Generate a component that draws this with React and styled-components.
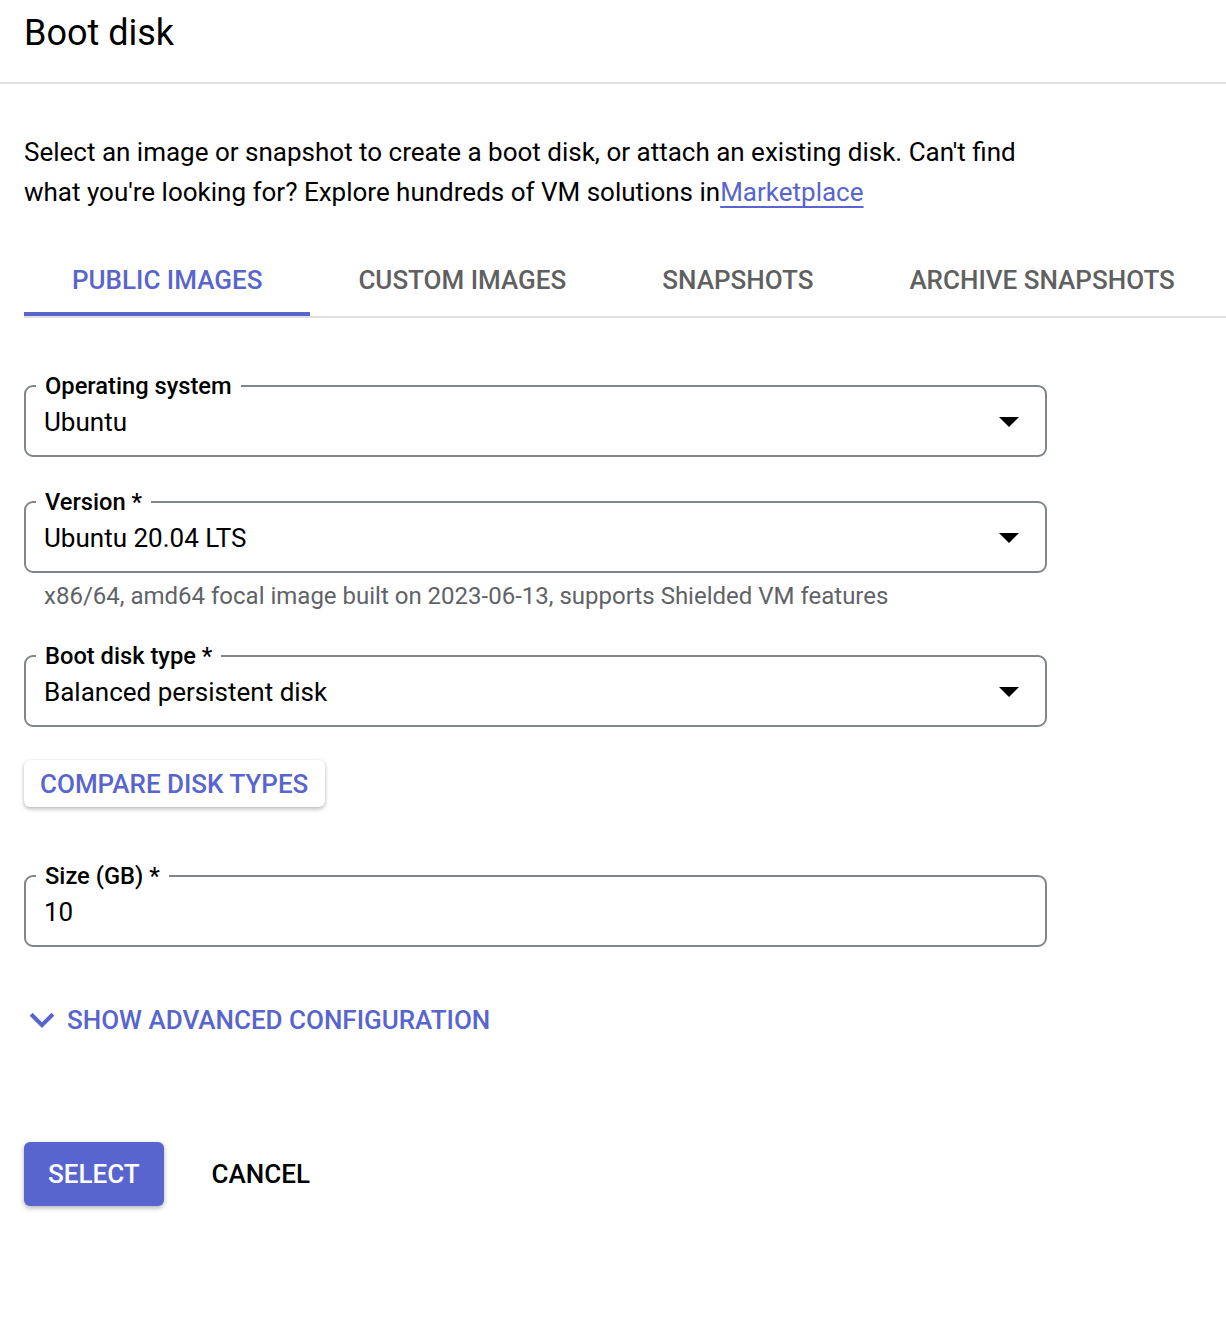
import React, { useState } from 'react';
import styled, { createGlobalStyle } from 'styled-components';

const GlobalStyle = createGlobalStyle`
  body {
    margin: 0;
    background: #ffffff;
    font-family: Roboto, "Noto Sans", "Liberation Sans", sans-serif;
    color: #202124;
  }
`;

const tabs = ['PUBLIC IMAGES', 'CUSTOM IMAGES', 'SNAPSHOTS', 'ARCHIVE SNAPSHOTS'];

const fields = [
  { label: 'Operating system', value: 'Ubuntu', select: true },
  {
    label: 'Version *',
    value: 'Ubuntu 20.04 LTS',
    select: true,
    hint: 'x86/64, amd64 focal image built on 2023-06-13, supports Shielded VM features',
  },
  { label: 'Boot disk type *', value: 'Balanced persistent disk', select: true },
];

const DropArrow = () => (
  <svg width="20" height="10" viewBox="7 10 10 5">
    <path d="M7 10l5 5 5-5z" fill="#000" />
  </svg>
);

const Chevron = () => (
  <svg width="26" height="16" viewBox="6 8.2 12 7.8">
    <path d="M16.59 8.59L12 13.17 7.41 8.59 6 10l6 6 6-6z" fill="#5865ce" />
  </svg>
);

const Field = ({ label, value, select, hint }) => (
  <FieldGroup>
    <FieldBox>
      <Legend>{label}</Legend>
      <FieldRow>
        <FieldValue>{value}</FieldValue>
        {select && <DropArrow />}
      </FieldRow>
    </FieldBox>
    {hint && <Hint>{hint}</Hint>}
  </FieldGroup>
);

const App = () => {
  const [activeTab, setActiveTab] = useState('PUBLIC IMAGES');

  return (
    <Page>
      <GlobalStyle />
      <Header>
        <Title>Boot disk</Title>
      </Header>
      <Body>
        <Intro>
          Select an image or snapshot to create a boot disk, or attach an existing disk. Can't find
          what you're looking for? Explore hundreds of VM solutions in<Link href="#">Marketplace</Link>
        </Intro>

        <TabBar>
          {tabs.map((tab) => (
            <Tab key={tab} active={activeTab === tab} onClick={() => setActiveTab(tab)}>
              {tab}
            </Tab>
          ))}
        </TabBar>

        <Form>
          {fields.map((f) => (
            <Field key={f.label} {...f} />
          ))}

          <CompareButton>COMPARE DISK TYPES</CompareButton>

          <SizeGroup>
            <Field label="Size (GB) *" value="10" />
          </SizeGroup>

          <AdvancedToggle>
            <Chevron />
            SHOW ADVANCED CONFIGURATION
          </AdvancedToggle>

          <Actions>
            <PrimaryButton>SELECT</PrimaryButton>
            <TextButton>CANCEL</TextButton>
          </Actions>
        </Form>
      </Body>
    </Page>
  );
};

const Page = styled.div`
  width: 100%;
  min-height: 1320px;
`;

const Header = styled.div`
  padding: 12px 24px 28px;
  border-bottom: 2px solid #dfe0e2;
`;

const Title = styled.h1`
  margin: 0;
  font-size: 36px;
  font-weight: 400;
  line-height: 42px;
  color: #000;
`;

const Body = styled.div`
  padding-left: 24px;
`;

const Intro = styled.p`
  margin: 48px 0 0;
  max-width: 1023px;
  font-size: 26px;
  line-height: 40px;
  color: #000;
`;

const Link = styled.a`
  color: #5865ce;
  text-decoration: underline;
  text-decoration-thickness: 2px;
  text-underline-offset: 5px;
`;

const TabBar = styled.div`
  display: flex;
  margin-top: 32px;
  border-bottom: 2px solid #e0e0e0;
`;

const Tab = styled.div`
  height: 72px;
  box-sizing: border-box;
  padding: 4px 48px 0;
  display: flex;
  align-items: center;
  font-size: 26px;
  font-weight: 500;
  color: ${(p) => (p.active ? '#5865ce' : '#5f6060')};
  border-bottom: 4px solid ${(p) => (p.active ? '#5865ce' : 'transparent')};
  cursor: pointer;
`;

const Form = styled.div`
  display: flex;
  flex-direction: column;
  align-items: flex-start;
  padding-top: 53px;
`;

const FieldGroup = styled.div`
  width: 1023px;
  margin-bottom: 30px;
`;

const FieldBox = styled.fieldset`
  margin: 0;
  padding: 0 10px;
  border: 2px solid #80868b;
  border-radius: 9px;
  min-inline-size: 0;
`;

const Legend = styled.legend`
  padding: 0 9px;
  font-size: 23.7px;
  font-weight: 500;
  line-height: 30px;
  color: #000;
`;

const FieldRow = styled.div`
  display: flex;
  align-items: center;
  justify-content: space-between;
  height: 42px;
  padding: 0 16px 12px 8px;
`;

const FieldValue = styled.div`
  font-size: 26px;
  color: #000;
`;

const Hint = styled.div`
  margin-top: 8px;
  padding-left: 20px;
  font-size: 24px;
  line-height: 30px;
  color: #5f6368;
`;

const CompareButton = styled.button`
  margin-top: 3px;
  height: 47px;
  padding: 0 17px 0 16px;
  border: none;
  border-radius: 6px;
  background: #fff;
  box-shadow: 0 2px 4px rgba(0, 0, 0, 0.28), 0 0 1px rgba(0, 0, 0, 0.12);
  font-family: inherit;
  font-size: 26px;
  font-weight: 500;
  color: #5865ce;
  cursor: pointer;
`;

const SizeGroup = styled.div`
  margin-top: 54px;
`;

const AdvancedToggle = styled.div`
  display: flex;
  align-items: center;
  gap: 12px;
  margin-top: 25px;
  padding-left: 5px;
  height: 36px;
  font-size: 26px;
  font-weight: 500;
  color: #5865ce;
  cursor: pointer;
`;

const Actions = styled.div`
  display: flex;
  align-items: center;
  gap: 24px;
  margin-top: 104px;
`;

const PrimaryButton = styled.button`
  height: 64px;
  padding: 0 24px;
  border: none;
  border-radius: 6px;
  background: #5865ce;
  box-shadow: 0 2px 5px rgba(0, 0, 0, 0.3);
  font-family: inherit;
  font-size: 26px;
  font-weight: 500;
  color: #fff;
  cursor: pointer;
`;

const TextButton = styled.button`
  height: 64px;
  padding: 0 24px;
  border: none;
  background: transparent;
  font-family: inherit;
  font-size: 26px;
  font-weight: 500;
  color: #000;
  cursor: pointer;
`;

export default App;
